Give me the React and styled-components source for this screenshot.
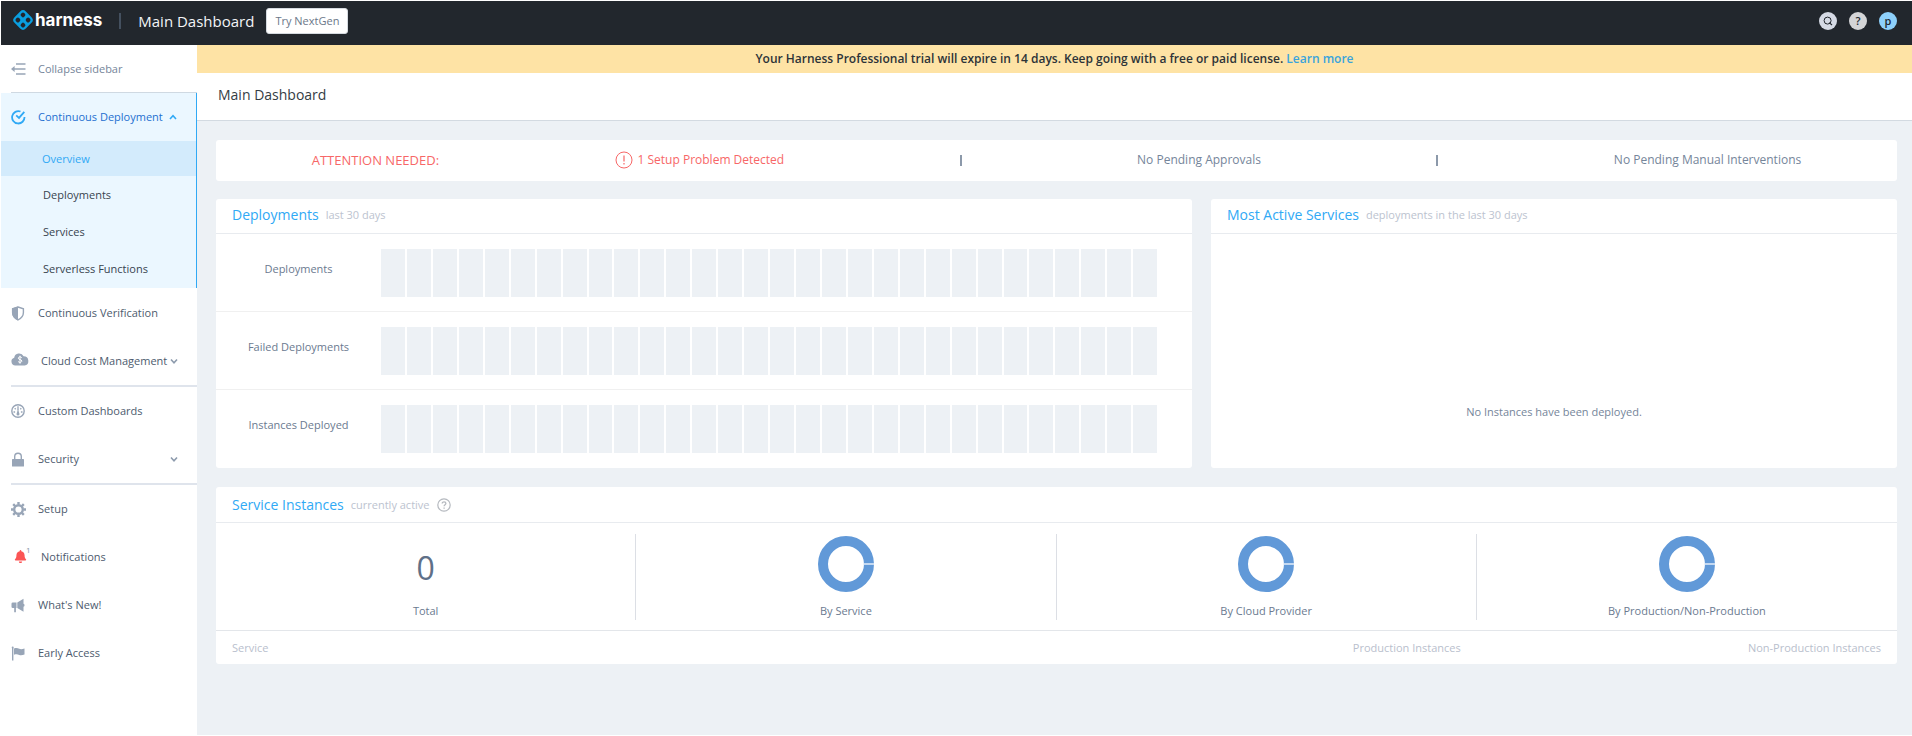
import styled, { createGlobalStyle, css } from 'styled-components';
import { FaBell } from 'react-icons/fa';

const GlobalStyle = createGlobalStyle`
  * {
    box-sizing: border-box;
  }
  body {
    margin: 0;
    background: #ffffff;
    font-family: 'Open Sans', 'Noto Sans', sans-serif;
    font-size: 11px;
    line-height: 16px;
    color: #4d5b6e;
  }
  h1, h2, p {
    margin: 0;
    font-weight: 400;
  }
  a {
    color: inherit;
    text-decoration: none;
  }
  button {
    font: inherit;
    cursor: pointer;
  }
`;

const Page = styled.div`
  display: flex;
  flex-direction: column;
  min-height: 100vh;
  padding: 1px 0 1px 1px;
`;

const TopBar = styled.header`
  display: flex;
  align-items: flex-start;
  justify-content: space-between;
  height: 44px;
  padding: 7px 15px 0 12px;
  background: #22272d;
  color: #f3f5f7;
`;

const Brand = styled.div`
  display: flex;
  align-items: center;
  height: 26px;
`;

const LogoLink = styled.a`
  display: flex;
  align-items: center;
  gap: 2px;
  height: 24px;
  margin-bottom: 2px;
  color: #ffffff;
  font: 700 17px/24px Inter, sans-serif;
`;

const BrandDivider = styled.span`
  width: 2px;
  height: 16px;
  margin: 0 17px 0 17px;
  background: #44505f;
`;

const BrandTitle = styled.span`
  font-size: 15px;
  line-height: 24px;
`;

const NextGenButton = styled.button`
  height: 26px;
  margin-left: 12px;
  padding: 0 8px;
  border: 1px solid #d5dae0;
  border-radius: 3px;
  background: #ffffff;
  color: #6b7789;
`;

const TopActions = styled.div`
  display: flex;
  gap: 12px;
  padding-top: 4px;
`;

const RoundButton = styled.button`
  display: flex;
  align-items: center;
  justify-content: center;
  width: 18px;
  height: 18px;
  padding: 0;
  border: none;
  border-radius: 50%;
  background: ${({ $color }) => $color};
  color: #22272d;
  font-weight: 600;
`;

const Body = styled.div`
  display: flex;
  flex: 1;
`;

const Sidebar = styled.nav`
  flex: 0 0 196px;
  background: #ffffff;
`;

const CollapseButton = styled.button`
  display: flex;
  align-items: center;
  width: 100%;
  height: 47px;
  padding: 0 0 0 10px;
  border: none;
  background: none;
  color: #75859a;
`;

const Separator = styled.hr`
  height: ${({ $thin }) => ($thin ? '1px' : '2px')};
  margin: 0 0 0 10px;
  border: none;
  background: ${({ $thin }) => ($thin ? '#cfd9e2' : '#dfe4ec')};
`;

const NavGroup = styled.div`
  margin-bottom: 1px;
  padding-bottom: 1px;
  border-right: 1px solid #30a9f5;
  background: #ebf7ff;
`;

const NavItem = styled.a`
  display: flex;
  align-items: center;
  height: 48px;
  padding: 0 19px 0 10px;
  color: ${({ $active }) => ($active ? '#1e6fd0' : '#4d5b6e')};
  font-weight: 500;
`;

const NavIcon = styled.span`
  display: flex;
  align-items: center;
  position: relative;
  flex: 0 0 ${({ $wide }) => ($wide ? '30px' : '27px')};
  color: ${({ $color }) => $color || '#98a5b7'};
`;

const NavCount = styled.sup`
  position: absolute;
  top: -6px;
  left: 15px;
  color: #8794a6;
  font-size: 8px;
  line-height: 12px;
`;

const NavText = styled.span`
  flex: 1;
  white-space: nowrap;
`;

const Caret = styled.span`
  display: flex;
  color: ${({ $active }) => ($active ? '#30a9f5' : '#8d9bad')};
`;

const SubItem = styled.a`
  display: flex;
  align-items: center;
  height: 37px;
  padding-left: 42px;
  color: #38444f;
  font-weight: 500;

  ${({ $selected }) =>
    $selected &&
    css`
      height: 35px;
      padding-left: 41px;
      background: #d3ebfc;
      color: #30a9f5;
    `}
`;

const Content = styled.div`
  display: flex;
  flex: 1;
  flex-direction: column;
  min-width: 0;
  background: #edf1f5;
`;

const TrialBanner = styled.p`
  height: 28px;
  background: #fee3a5;
  color: #2d3338;
  font-size: 12px;
  font-weight: 600;
  line-height: 28px;
  text-align: center;
`;

const BannerLink = styled.a`
  color: #3aa3dc;
`;

const PageTitle = styled.h1`
  height: 48px;
  padding-left: 21px;
  border-bottom: 1px solid #d3dae1;
  background: #ffffff;
  color: #343c44;
  font-size: 14px;
  line-height: 44px;
`;

const Main = styled.main`
  display: flex;
  flex-direction: column;
  gap: 18px;
  padding: 19px 15px 19px 19px;
`;

const Card = styled.section`
  display: flex;
  flex-direction: column;
  min-width: 0;
  border-radius: 3px;
  background: #ffffff;
`;

const StatusBar = styled.section`
  display: flex;
  align-items: center;
  justify-content: space-around;
  height: 41px;
  padding: 0 8px 1px;
  border-radius: 3px;
  background: #ffffff;
  color: #75859a;
  font-size: 12px;
`;

const Attention = styled.span`
  color: #f76767;
  font-size: 13px;
`;

const ProblemLink = styled.a`
  display: flex;
  align-items: center;
  gap: 5px;
  color: #f76767;
`;

const StatusDivider = styled.span`
  width: 2px;
  height: 11px;
  background: #8c99aa;
`;

const CardRow = styled.div`
  display: grid;
  grid-template-columns: 976fr 686fr;
  gap: 19px;
  margin-bottom: 1px;
`;

const CardHeader = styled.header`
  display: flex;
  align-items: center;
  gap: 7px;
  height: ${({ $tall }) => ($tall ? '36px' : '35px')};
  padding: 0 16px ${({ $tall }) => ($tall ? '0' : '2px')};
  border-bottom: 1px solid #e8ebef;
`;

const CardTitle = styled.h2`
  color: #30a9f5;
  font-size: 14px;
  line-height: 20px;
`;

const CardHint = styled.span`
  color: #bcc3cf;
`;

const HistoryRow = styled.div`
  display: flex;
  align-items: center;
  height: 78px;
  padding-right: 35px;

  &:not(:last-child) {
    border-bottom: 1px solid #f0f0f0;
  }
`;

const HistoryLabel = styled.span`
  flex: 0 0 165px;
  padding-bottom: 8px;
  color: #6b7a90;
  text-align: center;
`;

const History = styled.div`
  display: flex;
  flex: 1;
  gap: 2px;
`;

const Day = styled.span`
  flex: 1;
  height: 48px;
  background: #edf1f5;
`;

const EmptyNote = styled.p`
  display: flex;
  flex: 1;
  align-items: center;
  justify-content: center;
  padding-top: 122px;
  color: #75859a;
`;

const Stats = styled.div`
  display: grid;
  grid-template-columns: repeat(4, 1fr);
  padding: 11px 0 10px;
  border-bottom: 1px solid #e3e6ea;
`;

const Stat = styled.div`
  display: flex;
  flex-direction: column;
  align-items: center;
  height: 86px;
  color: #6b7a90;

  &:not(:last-child) {
    border-right: 1px solid #dcdfe5;
  }
`;

const StatFigure = styled.div`
  display: flex;
  align-items: center;
  justify-content: center;
  height: 60px;
  margin-bottom: 9px;
`;

const Total = styled.span`
  padding-top: 8px;
  color: #5f7088;
  font-size: 32px;
  line-height: 40px;
`;

const InstanceTable = styled.table`
  width: 100%;
  height: 33px;
  border-collapse: collapse;
  table-layout: fixed;
`;

const HeadCell = styled.th`
  width: ${({ $width }) => $width};
  padding: 0 16px;
  color: #b9c0cd;
  font-weight: 400;
  text-align: ${({ $align }) => $align || 'left'};
`;

const Logo = () => (
  <svg width="20" height="20" viewBox="0 0 20 20" fill="none" aria-hidden="true">
    <g transform="rotate(45 10 10)">
      <rect x="2" y="2" width="16" height="16" rx="4" fill="#0a9fe0" />
      <g fill="#22272d">
        <rect x="4.2" y="4.2" width="4.4" height="4.4" rx="1.7" />
        <rect x="11.4" y="4.2" width="4.4" height="4.4" rx="1.7" />
        <rect x="4.2" y="11.4" width="4.4" height="4.4" rx="1.7" />
        <rect x="11.4" y="11.4" width="4.4" height="4.4" rx="1.7" />
      </g>
    </g>
  </svg>
);

const CollapseIcon = () => (
  <svg width="15" height="12" viewBox="0 0 15 12" aria-hidden="true">
    <path d="M0 6l3.600-3v6z" fill="#98a5b7" />
    <path d="M5 1h9.500M3 6h11.500M5 11h9.500" stroke="#98a5b7" strokeWidth="1.700" />
  </svg>
);

const DeployIcon = () => (
  <svg width="15" height="15" viewBox="0 0 15 15" fill="none" stroke="#30a9f5" aria-hidden="true">
    <path d="M9.500 1.500A6.200 6.200 0 1 0 13.500 7" strokeWidth="1.800" />
    <path d="M5.200 5.400l2.800 2.500 5.300-6" strokeWidth="1.800" />
  </svg>
);

const ShieldIcon = () => (
  <svg width="14" height="15" viewBox="0 0 14 15" aria-hidden="true">
    <path
      d="M7 1L12.400 2.800v3.800c0 3.400-2.100 5.800-5.400 7.300-3.300-1.500-5.400-3.900-5.400-7.300V2.800z"
      fill="#ffffff"
      stroke="#98a5b7"
      strokeWidth="1.400"
    />
    <path d="M7 .5L1 2.600v4c0 3.600 2.300 6.200 6 7.900z" fill="#98a5b7" />
  </svg>
);

const CloudIcon = () => (
  <svg width="18" height="18" viewBox="0 0 18 18" aria-hidden="true">
    <path
      d="M4.300 13.500A4 4 0 0 1 3.200 5.700 5 5 0 0 1 12.600 4.200 4.700 4.700 0 0 1 13.600 13.500z"
      fill="#98a5b7"
    />
    <path
      d="M10.800 5.800C10.200 5.100 9.700 4.900 9 4.900c-1 0-1.700.5-1.700 1.300 0 1.800 3.500.9 3.500 2.800 0 .9-.8 1.400-1.800 1.400-.8 0-1.500-.3-1.900-1M9 3.700v8"
      fill="none"
      stroke="#ffffff"
    />
  </svg>
);

const GaugeIcon = () => (
  <svg width="14" height="14" viewBox="0 0 14 14" fill="none" stroke="#98a5b7" aria-hidden="true">
    <circle cx="7" cy="7" r="6.200" strokeWidth="1.400" />
    <path
      d="M2.500 8h1.600M3.700 4.300l1 1M7 2.200v4M10.300 4.300l-1 1M11.500 8H9.900"
      strokeWidth="1.300"
    />
    <path d="M7 5l1.500 5a1.500 1.500 0 1 1-3 0z" fill="#98a5b7" stroke="none" />
  </svg>
);

const LockIcon = () => (
  <svg width="14" height="15" viewBox="0 0 14 15" fill="none" aria-hidden="true">
    <path d="M3.700 8V4.500a3.300 3.300 0 0 1 6.600 0V8" stroke="#98a5b7" strokeWidth="1.400" />
    <rect x="1" y="7" width="12" height="7.500" rx=".6" fill="#98a5b7" />
  </svg>
);

const GearIcon = () => (
  <svg width="15" height="15" viewBox="0 0 15 15" fill="none" stroke="#98a5b7" aria-hidden="true">
    <circle cx="7.500" cy="7.500" r="4.300" strokeWidth="2.400" />
    <path
      d="M7.500 0v2.500M7.500 12.500V15M0 7.500h2.500M12.500 7.500H15M2.200 2.200L4 4M11 11l1.800 1.800M2.200 12.800L4 11M11 4l1.800-1.800"
      strokeWidth="2.400"
    />
  </svg>
);

const MegaphoneIcon = () => (
  <svg width="15" height="15" viewBox="0 0 15 15" fill="#98a5b7" aria-hidden="true">
    <path d="M1.800 4.500H5.500V10H4.900v4.300H3.200V10H1.800A1.300 1.300 0 0 1 .5 8.700V5.800a1.300 1.300 0 0 1 1.300-1.300z" />
    <path d="M6.300 4.500L12.500.800V5.800a1.600 1.600 0 0 1 0 3v5L6.300 10z" />
  </svg>
);

const FlagIcon = () => (
  <svg width="15" height="15" viewBox="0 0 15 15" fill="#98a5b7" aria-hidden="true">
    <circle cx="1.700" cy="1.500" r="1" />
    <path d="M1 2h1.400v12.500H1z" />
    <path d="M3 2.500c2.500-1 3.800-.3 5.200.3 1.400.6 3 .5 5.300-.3v6c-2.300.9-3.900 1-5.300.4C6.800 8.300 5.500 7.700 3 8.700z" />
  </svg>
);

const ChevronIcon = ({ up }) => (
  <svg width="8" height="8" viewBox="0 0 8 8" fill="none" stroke="currentColor" aria-hidden="true">
    <path d={up ? 'M1 6l3-3.300L7 6' : 'M1 2.500l3 3.300 3-3.300'} strokeWidth="1.600" />
  </svg>
);

const BellIcon = () => (
  <svg width="18" height="14" viewBox="0 0 18 14" aria-hidden="true">
    <FaBell x="3" size={13} />
  </svg>
);

const AlertIcon = () => (
  <svg width="18" height="18" viewBox="0 0 18 18" fill="none" stroke="#f76767" aria-hidden="true">
    <circle cx="9" cy="9" r="8" />
    <path d="M9 4.500v6M9 12v1.500" strokeWidth="1.200" />
  </svg>
);

const SearchIcon = () => (
  <svg width="10" height="10" viewBox="0 0 10 10" fill="none" stroke="#22272d" aria-hidden="true">
    <circle cx="4.600" cy="4.600" r="3.500" />
    <path d="M6.200 6.600L9 9" strokeWidth="1.200" />
  </svg>
);

const HelpIcon = () => (
  <svg width="14" height="14" viewBox="0 0 14 14" fill="none" stroke="#b5b9bf" aria-hidden="true">
    <circle cx="7" cy="7" r="6.200" strokeWidth="1.200" />
    <path
      d="M5.200 5.600c0-2.400 3.700-2.200 3.700-.1 0 1.200-1.800 1.300-1.800 2.800M7.100 9.400v1.300"
      strokeWidth="1.300"
    />
  </svg>
);

const Donut = () => (
  <svg width="56" height="56" viewBox="0 0 56 56" fill="none" aria-hidden="true">
    <circle cx="28" cy="28" r="23" stroke="#6199d8" strokeWidth="10" />
    <path d="M45 28h11" stroke="#e4eefa" strokeWidth="1.500" />
  </svg>
);

const subItems = ['Deployments', 'Services', 'Serverless Functions'];
const histories = ['Deployments', 'Failed Deployments', 'Instances Deployed'];
const charts = ['By Service', 'By Cloud Provider', 'By Production/Non-Production'];
const days = Array.from({ length: 30 }, (_, idx) => idx);

const NavEntry = ({ icon, color, wide, count, caret, active, children }) => (
  <NavItem href="#" $active={active}>
    <NavIcon $color={color} $wide={wide}>
      {icon}
      {count ? <NavCount>{count}</NavCount> : null}
    </NavIcon>
    <NavText>{children}</NavText>
    {caret && <Caret $active={active}>{caret}</Caret>}
  </NavItem>
);

const App = () => {
  return (
    <Page>
      <GlobalStyle />
      <TopBar>
        <Brand>
          <LogoLink href="#">
            <Logo />
            harness
          </LogoLink>
          <BrandDivider />
          <BrandTitle>Main Dashboard</BrandTitle>
          <NextGenButton>Try NextGen</NextGenButton>
        </Brand>
        <TopActions>
          <RoundButton $color="#d5dae5" aria-label="Search">
            <SearchIcon />
          </RoundButton>
          <RoundButton $color="#d4d5d7">?</RoundButton>
          <RoundButton $color="#8dd0fb">p</RoundButton>
        </TopActions>
      </TopBar>
      <Body>
        <Sidebar>
          <CollapseButton>
            <NavIcon>
              <CollapseIcon />
            </NavIcon>
            Collapse sidebar
          </CollapseButton>
          <Separator $thin />
          <NavGroup>
            <NavEntry icon={<DeployIcon />} caret={<ChevronIcon up />} active>
              Continuous Deployment
            </NavEntry>
            <SubItem href="#" $selected>
              Overview
            </SubItem>
            {subItems.map((item) => (
              <SubItem href="#" key={item}>
                {item}
              </SubItem>
            ))}
          </NavGroup>
          <NavEntry icon={<ShieldIcon />}>Continuous Verification</NavEntry>
          <NavEntry icon={<CloudIcon />} caret={<ChevronIcon />} wide>
            Cloud Cost Management
          </NavEntry>
          <Separator />
          <NavEntry icon={<GaugeIcon />}>Custom Dashboards</NavEntry>
          <NavEntry icon={<LockIcon />} caret={<ChevronIcon />}>
            Security
          </NavEntry>
          <Separator />
          <NavEntry icon={<GearIcon />}>Setup</NavEntry>
          <NavEntry icon={<BellIcon />} color="#fb5555" count={1} wide>
            Notifications
          </NavEntry>
          <NavEntry icon={<MegaphoneIcon />}>What's New!</NavEntry>
          <NavEntry icon={<FlagIcon />}>Early Access</NavEntry>
        </Sidebar>
        <Content>
          <TrialBanner>
            Your Harness Professional trial will expire in 14 days. Keep going with a free or paid license.{' '}
            <BannerLink href="#">Learn more</BannerLink>
          </TrialBanner>
          <PageTitle>Main Dashboard</PageTitle>
          <Main>
            <StatusBar>
              <Attention>ATTENTION NEEDED:</Attention>
              <ProblemLink href="#">
                <AlertIcon />1 Setup Problem Detected
              </ProblemLink>
              <StatusDivider />
              <span>No Pending Approvals</span>
              <StatusDivider />
              <span>No Pending Manual Interventions</span>
            </StatusBar>
            <CardRow>
              <Card>
                <CardHeader>
                  <CardTitle>Deployments</CardTitle>
                  <CardHint>last 30 days</CardHint>
                </CardHeader>
                {histories.map((label) => (
                  <HistoryRow key={label}>
                    <HistoryLabel>{label}</HistoryLabel>
                    <History>
                      {days.map((day) => (
                        <Day key={day} />
                      ))}
                    </History>
                  </HistoryRow>
                ))}
              </Card>
              <Card>
                <CardHeader>
                  <CardTitle>Most Active Services</CardTitle>
                  <CardHint>deployments in the last 30 days</CardHint>
                </CardHeader>
                <EmptyNote>No Instances have been deployed.</EmptyNote>
              </Card>
            </CardRow>
            <Card>
              <CardHeader $tall>
                <CardTitle>Service Instances</CardTitle>
                <CardHint>currently active</CardHint>
                <HelpIcon />
              </CardHeader>
              <Stats>
                <Stat>
                  <StatFigure>
                    <Total>0</Total>
                  </StatFigure>
                  Total
                </Stat>
                {charts.map((chart) => (
                  <Stat key={chart}>
                    <StatFigure>
                      <Donut />
                    </StatFigure>
                    {chart}
                  </Stat>
                ))}
              </Stats>
              <InstanceTable>
                <thead>
                  <tr>
                    <HeadCell>Service</HeadCell>
                    <HeadCell $width="25%" $align="right">
                      Production Instances
                    </HeadCell>
                    <HeadCell $width="25%" $align="right">
                      Non-Production Instances
                    </HeadCell>
                  </tr>
                </thead>
              </InstanceTable>
            </Card>
          </Main>
        </Content>
      </Body>
    </Page>
  );
};

export default App;
